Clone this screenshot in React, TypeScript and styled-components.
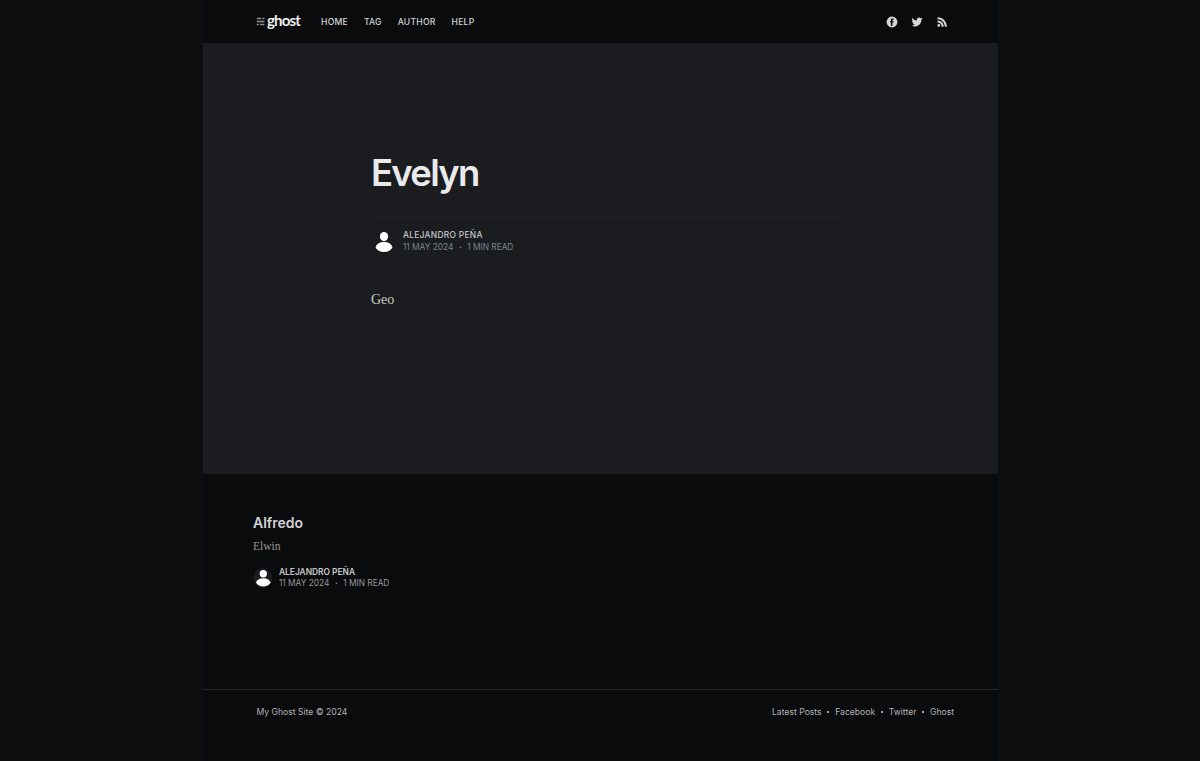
import React from "react";
import styled, { createGlobalStyle } from "styled-components";

const sans = 'Inter, "Liberation Sans", sans-serif';
const serif = '"Liberation Serif", serif';

const GlobalStyle = createGlobalStyle`
  * { box-sizing: border-box; }
  body { margin: 0; background: #0e0e0e; font-family: ${sans}; overflow: hidden; }
`;

const Page = styled.div`
  width: 795px;
  height: 761px;
  margin-left: 203px;
  background: #0a0b0d;
  display: flex;
  flex-direction: column;
`;

const Header = styled.header`
  height: 43px;
  flex: none;
  display: flex;
  align-items: center;
  padding: 0 50px 0 53px;
`;

const Logo = styled.a`
  display: flex;
  align-items: center;
  width: 65px;
  color: #eceeee;
`;

const Wordmark = styled.span`
  font: 700 15px/20px Lato, sans-serif;
  letter-spacing: -0.85px;
  margin: -3px 0 0 2px;
`;

const Nav = styled.nav`
  display: flex;
  gap: 16px;
  flex: 1;
`;

const NavLink = styled.a`
  font-size: 8.6px;
  line-height: 12px;
  font-weight: 500;
  letter-spacing: 0.23px;
  color: #d2d3d4;
`;

const Social = styled.div`
  display: flex;
  align-items: center;
  gap: 13px;
  color: #d5d6d7;
`;

const Article = styled.article`
  height: 431px;
  flex: none;
  background: #1b1c20;
  padding: 108px 158px 0 168px;
`;

const Title = styled.h1`
  margin: 0;
  height: 65.5px;
  font-size: 36.5px;
  line-height: 45px;
  font-weight: 600;
  letter-spacing: -1.75px;
  color: #e9eaeb;
`;

const Byline = styled.div<{ $card?: boolean }>`
  display: flex;
  align-items: center;
  border-top: ${(p) => (p.$card ? "none" : "1px solid #222327")};
  padding-top: ${(p) => (p.$card ? "0" : "10px")};
  gap: ${(p) => (p.$card ? "6px" : "5px")};
`;

const Details = styled.div<{ $card?: boolean }>`
  display: flex;
  flex-direction: column;
  font-size: 8.4px;
  line-height: ${(p) => (p.$card ? "11px" : "12px")};
  color: ${(p) => (p.$card ? "#97989a" : "#78868f")};
`;

const Author = styled.span<{ $card?: boolean }>`
  font-weight: ${(p) => (p.$card ? 600 : 500)};
  letter-spacing: ${(p) => (p.$card ? 0 : 0.3)}px;
  color: #c8c9ca;
`;

const Meta = styled.span`
  display: flex;
  align-items: center;
  letter-spacing: -0.04px;
`;

const MetaDot = styled.b`
  width: 14px;
  text-align: center;
  font-weight: 700;
`;

const Body = styled.p`
  margin: 35px 0 0;
  font: 14px/20px ${serif};
  color: #c9cacb;
`;

const Latest = styled.section`
  height: 215px;
  flex: none;
  padding: 39px 50px 0;
`;

const CardTitle = styled.h2`
  margin: 0;
  font-size: 14px;
  line-height: 20px;
  font-weight: 600;
  color: #d2d3d4;
`;

const Excerpt = styled.p`
  margin: 5px 0 13px;
  font: 11.5px/16px ${serif};
  color: #929394;
`;

const Footer = styled.footer`
  border-top: 1px solid #28292b;
  flex: 1;
  display: flex;
  justify-content: space-between;
  padding: 16px 44px 0 53.5px;
  font-size: 8.6px;
  line-height: 13px;
  color: #b2b3b4;
`;

const FooterLinks = styled.div`
  display: flex;
  align-items: center;
  height: 13px;
  gap: 5.8px;
`;

const Dot = styled.i`
  width: 2px;
  height: 2px;
  margin-top: -2px;
  background: #a2a3a4;
`;

const MenuMark = () => (
  <svg width="9" height="9" viewBox="0 0 9 9" fill="#8f9293">
    <path d="M.8.7h4.4v1.5H.8zM6.4.7h2v1.5h-2zM.8 3.8h7.6v1.4H.8zM.8 6.8h2v1.5h-2zM4 6.8h4.4v1.5H4z" />
  </svg>
);

const Avatar = ({ card = false }: { card?: boolean }) => (
  <svg width={card ? 20 : 27} height={card ? 20 : 27} viewBox="0 0 27 27">
    {card && <circle cx="13.5" cy="13.5" r="13" fill="#1b1c20" />}
    <ellipse cx={card ? 13.9 : 13} cy={card ? 7.8 : 8.6} rx={card ? 4.9 : 4.1} ry={card ? 5 : 4.6} fill="#fff" />
    <path
      d={card ? "M3.9 19.500c2-4.200 5.300-5.800 10-5.800s8 1.600 10 5.800c-2.200 3.800-5.700 5.500-10 5.500s-7.800-1.700-10-5.500z" : "M4.500 19.200c1.400-3.500 4.100-5.100 8.500-5.100s7.100 1.600 8.500 5.100c-1.400 3.200-4.200 4.700-8.500 4.700S5.900 22.400 4.500 19.200z"}
      fill="#fff"
    />
  </svg>
);

const FacebookIcon = () => (
  <svg width="12" height="12" viewBox="0 0 32 32" fill="currentColor">
    <path d="M16 1.500a14.500 14.500 0 1 0 0 29 14.500 14.500 0 0 0 0-29zm4.500 8.500h-1.800c-1.200 0-1.400.6-1.400 1.400V14h3.200l-.5 3.600h-2.700V26H13v-8.400h-2.500V14H13v-3c0-2.900 1.700-4.500 4.400-4.500l3.100.2z" />
  </svg>
);

const TwitterIcon = () => (
  <svg width="12" height="12" viewBox="-1 -1 26 26" fill="currentColor">
    <path d="M23.950 4.570a10 10 0 0 1-2.820.77 4.960 4.960 0 0 0 2.160-2.720c-.95.55-2 .96-3.130 1.180a4.920 4.920 0 0 0-8.380 4.480C7.690 8.100 4.070 6.130 1.640 3.160a4.820 4.820 0 0 0-.67 2.480c0 1.700.87 3.210 2.190 4.100a4.900 4.900 0 0 1-2.230-.62v.06a4.920 4.920 0 0 0 3.950 4.830 5 5 0 0 1-2.210.08 4.940 4.940 0 0 0 4.600 3.420A9.870 9.870 0 0 1 0 19.540a14 14 0 0 0 7.550 2.210c9.050 0 14-7.500 14-13.980 0-.21 0-.42-.02-.63a9.940 9.940 0 0 0 2.460-2.550z" />
  </svg>
);

const RssIcon = () => (
  <svg width="12" height="12" viewBox="0 0 24 24" fill="currentColor">
    <circle cx="5.600" cy="18.800" r="2.800" />
    <path d="M3 9v4c5 0 8.500 4 8.500 8.500h4C15.500 14.500 10.200 9 3 9zM3 2.500v4C11.300 6.500 17.700 13.500 17.700 21.500h4C21.700 11 13.500 2.500 3 2.500z" />
  </svg>
);

const Dateline = ({ card = false }: { card?: boolean }) => (
  <Details $card={card}>
    <Author $card={card}>ALEJANDRO PEÑA</Author>
    <Meta>
      <span>11 MAY 2024</span>
      <MetaDot>·</MetaDot>
      <span>1 MIN READ</span>
    </Meta>
  </Details>
);

export default function App() {
  return (
    <>
      <GlobalStyle />
      <Page>
        <Header>
          <Logo>
            <MenuMark />
            <Wordmark>ghost</Wordmark>
          </Logo>
          <Nav>
            <NavLink>HOME</NavLink>
            <NavLink>TAG</NavLink>
            <NavLink>AUTHOR</NavLink>
            <NavLink>HELP</NavLink>
          </Nav>
          <Social>
            <FacebookIcon />
            <TwitterIcon />
            <RssIcon />
          </Social>
        </Header>
        <Article>
          <Title>Evelyn</Title>
          <Byline>
            <Avatar />
            <Dateline />
          </Byline>
          <Body>Geo</Body>
        </Article>
        <Latest>
          <CardTitle>Alfredo</CardTitle>
          <Excerpt>Elwin</Excerpt>
          <Byline $card>
            <Avatar card />
            <Dateline card />
          </Byline>
        </Latest>
        <Footer>
          <span>My Ghost Site © 2024</span>
          <FooterLinks>
            <span>Latest Posts</span>
            <Dot />
            <span>Facebook</span>
            <Dot />
            <span>Twitter</span>
            <Dot />
            <span>Ghost</span>
          </FooterLinks>
        </Footer>
      </Page>
    </>
  );
}
